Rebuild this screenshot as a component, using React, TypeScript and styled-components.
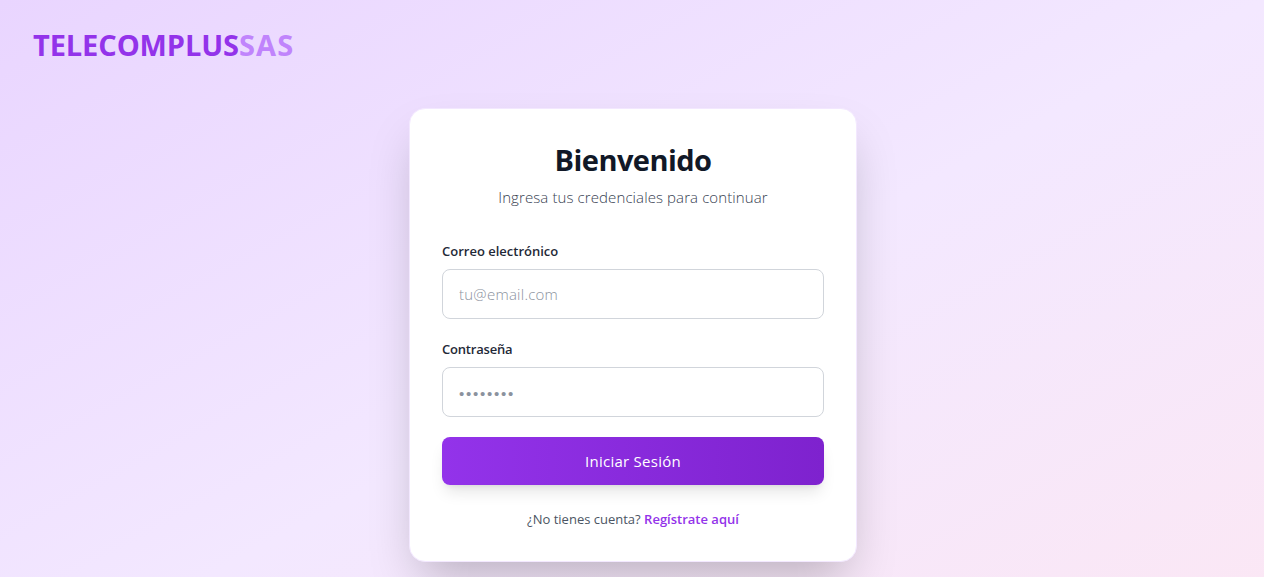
import React, { useState } from "react";
import styled, { createGlobalStyle } from "styled-components";

const GlobalStyle = createGlobalStyle`
  * {
    box-sizing: border-box;
  }

  body {
    margin: 0;
    overflow: hidden;
    font-family: "Open Sans", "Noto Sans", sans-serif;
    line-height: 1.5;
  }
`;

const Page = styled.div`
  height: 100vh;
  overflow: hidden;
  background: linear-gradient(to bottom right, #e9d5ff, #f3e8ff, #fce7f3);
  background-size: 100% 690px;
`;

const Header = styled.header`
  padding: 23px 33px 25px;
`;

const Logo = styled.h1`
  margin: 0;
  height: 44px;
  font-size: 29px;
  line-height: 44px;
  font-weight: 700;
`;

const LogoText = styled.span<{ $light?: boolean }>`
  color: ${({ $light }) => ($light ? "#c084fc" : "#9333ea")};
  letter-spacing: ${({ $light }) => ($light ? "1.1px" : "-0.1px")};
`;

const Main = styled.main`
  display: flex;
  justify-content: center;
  padding: 16px 0 0 2px;
`;

const Card = styled.form`
  width: 448px;
  height: 454px;
  padding: 32px;
  border: 1px solid #f3e8ff;
  border-radius: 16px;
  background: #ffffff;
  box-shadow: 0 25px 50px -12px rgba(0, 0, 0, 0.25);
`;

const Title = styled.h2`
  margin: 0;
  color: #111827;
  font-size: 29px;
  line-height: 38px;
  font-weight: 700;
  letter-spacing: -0.55px;
  text-align: center;
`;

const Subtitle = styled.p`
  margin: 6px 0 32px;
  color: #374151;
  font-size: 15px;
  line-height: 24px;
  font-weight: 300;
  letter-spacing: 0.1px;
  text-align: center;
`;

const Field = styled.div`
  margin-bottom: 20px;
`;

const Label = styled.label<{ $tight?: boolean }>`
  display: block;
  margin-bottom: 8px;
  color: #1f2937;
  font-size: 13px;
  line-height: 20px;
  font-weight: 600;
  letter-spacing: ${({ $tight }) => ($tight ? "-0.2px" : "0")};
`;

const Input = styled.input`
  display: block;
  width: 100%;
  height: 50px;
  padding: 12px 16px;
  border: 1px solid #d1d5db;
  border-radius: 8px;
  outline: none;
  color: #111827;
  font-family: inherit;
  font-size: 15px;
  font-weight: 300;
  letter-spacing: 0.25px;

  &::placeholder {
    color: #8b929e;
  }

  &:focus {
    border-color: #9333ea;
  }
`;

const PasswordInput = styled(Input)`
  padding-top: 14px;
  font-family: "Liberation Sans", sans-serif;
  font-size: 15px;
  letter-spacing: 1.75px;
`;

const SubmitButton = styled.button`
  display: block;
  width: 100%;
  height: 48px;
  border: 0;
  border-radius: 8px;
  background: linear-gradient(to right, #9333ea, #7e22ce);
  box-shadow: 0 10px 15px -3px rgba(0, 0, 0, 0.1),
    0 4px 6px -4px rgba(0, 0, 0, 0.1);
  color: #ffffff;
  font-family: inherit;
  font-size: 15px;
  font-weight: 500;
  letter-spacing: 0.25px;
  cursor: pointer;
`;

const Footer = styled.p`
  margin: 24px 0 0;
  color: #4b5563;
  font-size: 13px;
  line-height: 20px;
  text-align: center;
`;

const RegisterLink = styled.a`
  color: #9333ea;
  font-weight: 600;
  text-decoration: none;
`;

const App = () => {
  const [email, setEmail] = useState("");
  const [password, setPassword] = useState("");

  return (
    <Page>
      <GlobalStyle />
      <Header>
        <Logo>
          <LogoText>TELECOMPLUS</LogoText>
          <LogoText $light>SAS</LogoText>
        </Logo>
      </Header>
      <Main>
        <Card onSubmit={(e) => e.preventDefault()}>
          <Title>Bienvenido</Title>
          <Subtitle>Ingresa tus credenciales para continuar</Subtitle>
          <Field>
            <Label htmlFor="email">Correo electrónico</Label>
            <Input
              id="email"
              type="email"
              placeholder="tu@email.com"
              value={email}
              onChange={(e) => setEmail(e.target.value)}
            />
          </Field>
          <Field>
            <Label htmlFor="password" $tight>
              Contraseña
            </Label>
            <PasswordInput
              id="password"
              type="password"
              placeholder="••••••••"
              value={password}
              onChange={(e) => setPassword(e.target.value)}
            />
          </Field>
          <SubmitButton type="submit">Iniciar Sesión</SubmitButton>
          <Footer>
            ¿No tienes cuenta? <RegisterLink href="#">Regístrate aquí</RegisterLink>
          </Footer>
        </Card>
      </Main>
    </Page>
  );
};

export default App;
